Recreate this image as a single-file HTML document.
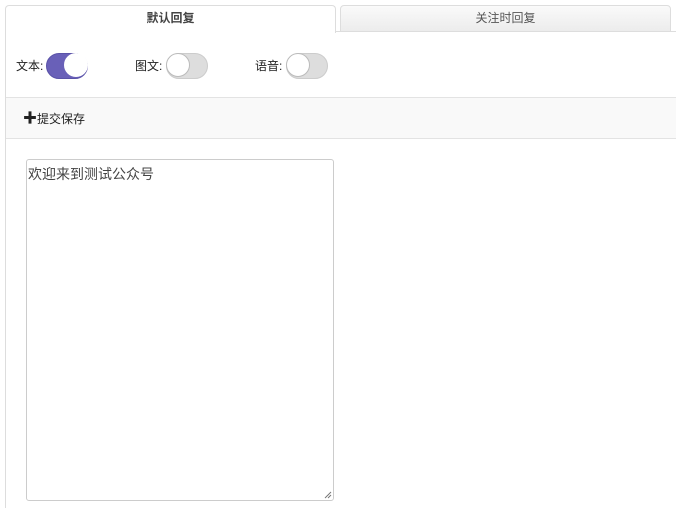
<!DOCTYPE html>
<html><head><meta charset="utf-8"><style>
*{box-sizing:border-box;margin:0;padding:0}
body{width:676px;height:508px;background:#fff;font-family:"Liberation Sans","Noto Sans CJK SC",sans-serif;font-size:12px;color:#333;position:relative;overflow:hidden}
.abs{position:absolute}
.tab{position:absolute;top:5px;height:27px;border:1px solid #ddd;border-radius:4px 4px 0 0;text-align:center;line-height:25px;font-size:12px}
.t1{left:5px;width:331px;background:#fff;border-bottom:none;font-weight:bold;color:#444;height:28px}
.t2{left:340px;width:331px;background:linear-gradient(#fafafa,#ececec);color:#555;height:27px}
.lbl{position:absolute;top:57px;font-size:12px;color:#222}
.tg{position:absolute;top:53px;width:42px;height:26px;border-radius:13px;border:1px solid #ccc;background:#ddd}
.tg.on{background:#6960b8;border-color:#5a52a8}
.tg i{position:absolute;top:0;width:24px;height:24px;border-radius:50%;background:#fff;border:1px solid #bbb}
</style></head><body>
<div class="abs" style="left:5px;top:31px;width:1px;height:477px;background:#ddd"></div>
<div class="abs" style="left:5px;top:31px;width:671px;height:1px;background:#ddd"></div>
<div class="tab t1">默认回复</div>
<div class="tab t2">关注时回复</div>
<div class="lbl" style="left:16px">文本:</div>
<div class="tg on" style="left:46px"><i style="right:-1px;top:-1px;border-color:#fff"></i></div>
<div class="lbl" style="left:135px">图文:</div>
<div class="tg" style="left:166px"><i style="left:-1px;top:-1px"></i></div>
<div class="lbl" style="left:255px">语音:</div>
<div class="tg" style="left:286px"><i style="left:-1px;top:-1px"></i></div>
<div class="abs" style="left:6px;top:97px;width:670px;height:42px;background:#f9f9f9;border-top:1px solid #e3e3e3;border-bottom:1px solid #e3e3e3"></div>
<div class="abs" style="left:23px;top:110px;font-size:12px;color:#222"><span style="font-weight:bold;font-size:14px;line-height:12px">✚</span>提交保存</div>
<div class="abs" style="left:26px;top:159px;width:308px;height:342px;border:1px solid #ccc;border-radius:3px;padding:4px 0 0 1px;font-size:14px;color:#444">欢迎来到测试公众号
<svg class="abs" style="right:1px;bottom:1px" width="8" height="8"><path d="M7 1L1 7M7 4L4 7" stroke="#777" stroke-width="1"/></svg></div>
</body></html>
